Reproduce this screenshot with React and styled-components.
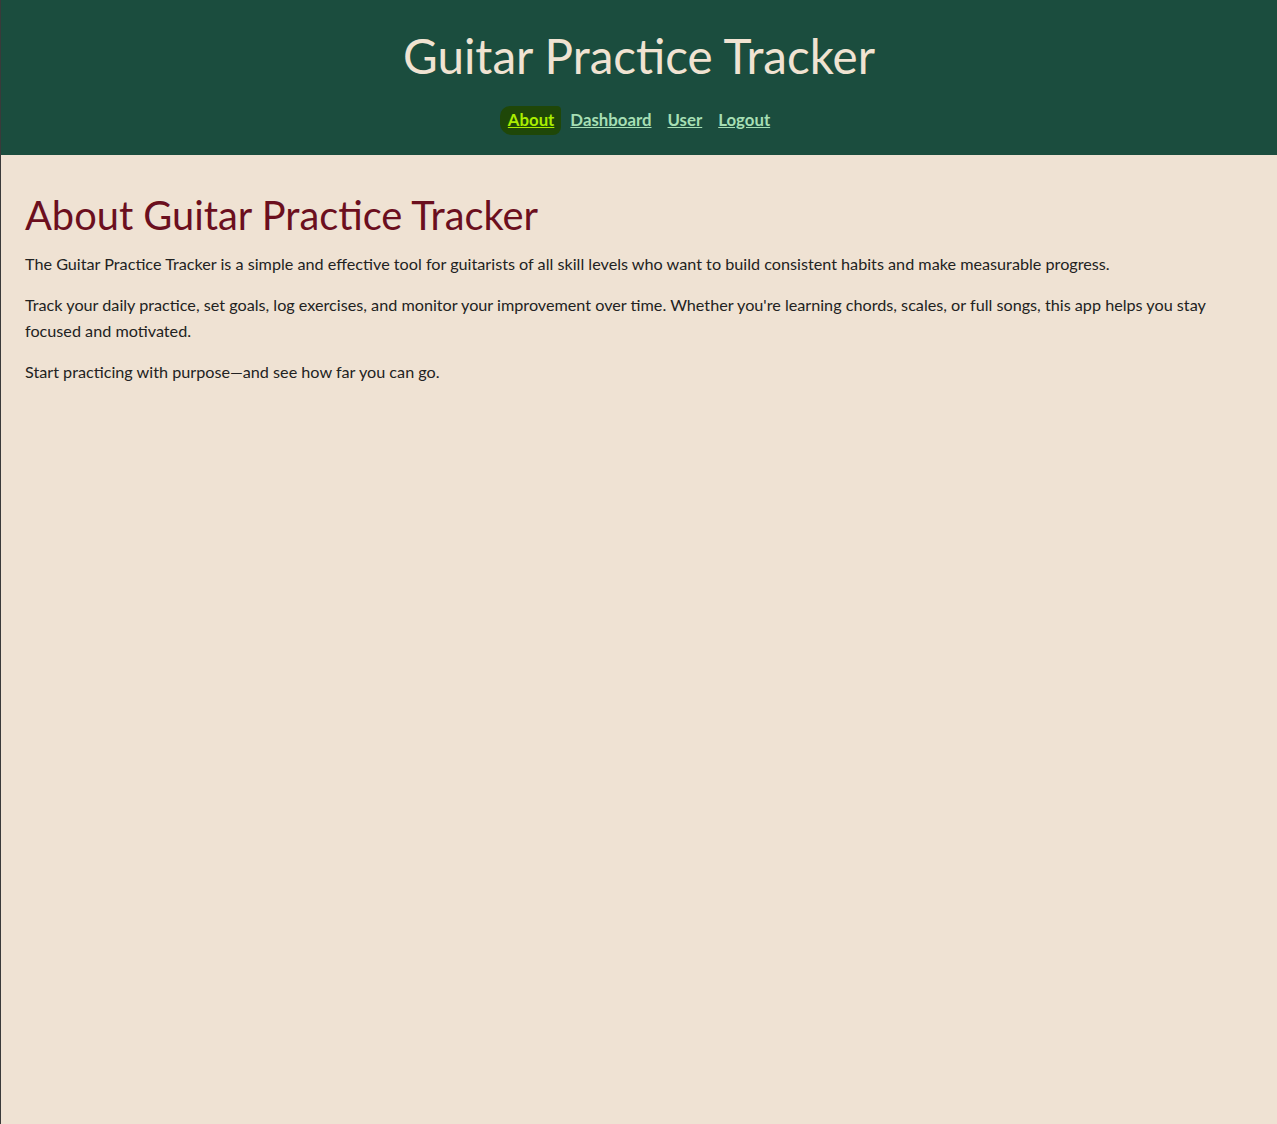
import styled, { createGlobalStyle } from 'styled-components';

const Global = createGlobalStyle`
  html, body {
    margin: 0;
    padding: 0;
    background: #efe2d3;
  }
  body {
    font-family: Lato, "Noto Sans", sans-serif;
    border-left: 1px solid #3a3a3a;
    min-height: 1124px;
    box-sizing: border-box;
  }
`;

const Header = styled.header`
  background: #1b4d3e;
  height: 155px;
  box-sizing: border-box;
  padding-top: 26px;
  text-align: center;
`;

const Title = styled.h1`
  margin: 0;
  font-size: 47.6px;
  font-weight: 400;
  line-height: 60px;
  color: #f0e3d2;
`;

const Nav = styled.nav`
  display: flex;
  justify-content: center;
  gap: 16px;
  margin-top: 23px;
`;

const NavItem = styled.span`
  position: relative;
  z-index: 0;
`;

const NavLink = styled.a`
  position: relative;
  font-size: 16.8px;
  font-weight: 700;
  color: ${p => (p.$active ? '#aaee00' : '#a6dfb4')};
  text-decoration: underline;
  padding: 2px 0;

  ${p => p.$active && `
    &::before {
      content: '';
      position: absolute;
      left: -8px;
      right: -7px;
      top: -1px;
      bottom: -3px;
      background: #1f4708;
      border-radius: 10px 4px 8px 12px;
      z-index: -1;
    }
  `}
`;

const Main = styled.main`
  padding: 22px 24px;
`;

const Heading = styled.h2`
  margin: 14px 0 12px;
  font-size: 39.8px;
  font-weight: 400;
  line-height: 48px;
  color: #6b0f1e;
`;

const Para = styled.p`
  margin: 0 0 15px;
  font-size: 16.2px;
  line-height: 26px;
  color: #222;
`;

export default function App() {
  return (
    <>
      <Global />
      <Header>
        <Title>Guitar Practice Tracker</Title>
        <Nav>
          <NavItem><NavLink href="#" $active>About</NavLink></NavItem>
          <NavItem><NavLink href="#">Dashboard</NavLink></NavItem>
          <NavItem><NavLink href="#">User</NavLink></NavItem>
          <NavItem><NavLink href="#">Logout</NavLink></NavItem>
        </Nav>
      </Header>
      <Main>
        <Heading>About Guitar Practice Tracker</Heading>
        <Para>
          The Guitar Practice Tracker is a simple and effective tool for guitarists of all skill levels who want to build consistent habits and make measurable progress.
        </Para>
        <Para>
          Track your daily practice, set goals, log exercises, and monitor your improvement over time. Whether you're learning chords, scales, or full songs, this app helps you stay focused and motivated.
        </Para>
        <Para>Start practicing with purpose—and see how far you can go.</Para>
      </Main>
    </>
  );
}
